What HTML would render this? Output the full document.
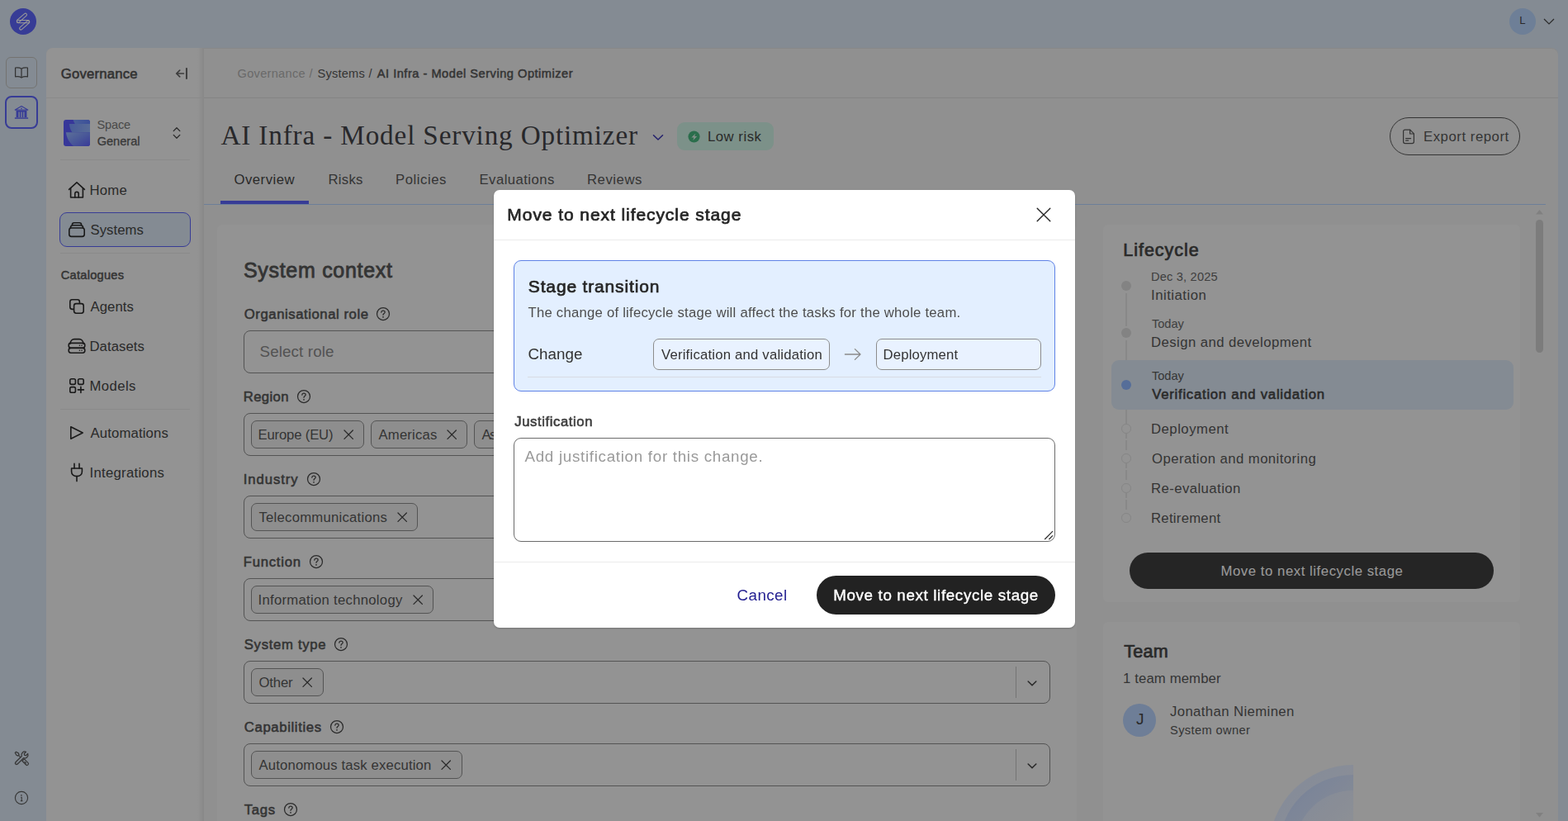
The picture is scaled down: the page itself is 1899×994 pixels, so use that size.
<!DOCTYPE html>
<html lang="en"><head><meta charset="utf-8"><title>AI Infra - Model Serving Optimizer</title>
<style>
html,body{margin:0;padding:0;}
body{width:1899px;height:994px;overflow:hidden;background:#dce8f5;font-family:"Liberation Sans",sans-serif;position:relative;}
#app{position:absolute;left:0;top:0;width:1899px;height:994px;overflow:hidden;}
.t{position:absolute;white-space:nowrap;margin:0;font-weight:400;}
h1,h2,h3{margin:0;}
button.t{background:none;border:0;padding:0;font-family:inherit;text-align:left;cursor:pointer;}
a.t{text-decoration:none;cursor:pointer;}
.overlay{position:absolute;left:0;top:0;width:1899px;height:994px;background:rgba(0,0,0,0.4);}
.modal{position:absolute;background:#fff;border-radius:7px;will-change:transform;box-shadow:0 1px 2px rgba(0,0,0,.22);}
</style></head>
<body>
<div id="app">
<header class="topbar">
<svg style="position:absolute;left:11px;top:9px;" width="34" height="34" viewBox="0 0 34 34" fill="none"><circle cx="17" cy="17" r="16" fill="#5d64fa"/>
<g stroke="#ffffff" stroke-width="1.05" fill="none">
<rect x="-7.5" y="-1.7" width="15" height="3.4" rx="1.7" transform="translate(15.4 12.7) rotate(-41)"/>
<rect x="-7.5" y="-1.7" width="15" height="3.4" rx="1.7" transform="translate(18.7 21.5) rotate(-41)"/>
<rect x="9.4" y="15.4" width="15.2" height="3.4" rx="1.7"/>
</g></svg>
<div style="position:absolute;left:1828px;top:10px;width:32px;height:32px;border-radius:50%;background:#b7d4fc;"></div>
<span class="t" style="left:1840.20px;top:17.47px;font-size:13px;line-height:16px;color:#464646;">L</span>
<svg style="position:absolute;left:1869px;top:22px;" width="14" height="8" viewBox="0 0 14 8" fill="none"><path d="M1 1 L7 7 L13 1" stroke="#464646" stroke-width="1.2"/></svg>
</header>
<nav class="rail">
<div style="position:absolute;left:7px;top:69px;width:38px;height:38px;border:1px solid #c1c0bc;border-radius:6px;box-sizing:border-box;"></div>
<svg style="position:absolute;left:17px;top:80px;" width="18" height="16" viewBox="0 0 18 16" fill="none"><g stroke="#555555" stroke-width="1.25" fill="none" stroke-linejoin="round">
<path d="M9 3.2 C7.2 2 4.2 1.6 1.6 2 V12.8 C4.2 12.4 7.2 12.8 9 14 C10.8 12.8 13.8 12.4 16.4 12.8 V2 C13.8 1.6 10.8 2 9 3.2 Z"/><path d="M9 3.2 V14"/></g></svg>
<div style="position:absolute;left:6px;top:116px;width:40px;height:40px;border:2px solid #5d64fa;border-radius:8px;box-sizing:border-box;"></div>
<svg style="position:absolute;left:17px;top:127px;" width="18" height="18" viewBox="0 0 18 18" fill="none"><path d="M1.3 6.1 L9 1.5 L16.7 6.1 Z" stroke="#5d64fa" stroke-width="1.2" stroke-linejoin="round" fill="none"/><circle cx="9" cy="4.3" r="0.85" fill="#5d64fa"/>
<path d="M2.6 6.9 H15.4 V15 H2.6 Z M5.5 8.4 V15 H6.7 V8.4 Z M8.4 8.4 V15 H9.6 V8.4 Z M11.3 8.4 V15 H12.5 V8.4 Z" fill="#5d64fa" fill-rule="evenodd"/><rect x="0.9" y="15.3" width="16.2" height="1.5" fill="#5d64fa"/></svg>
<svg style="position:absolute;left:16px;top:908px;" width="20" height="20" viewBox="0 0 20 20" fill="none"><g stroke="#5c5c5c" stroke-width="1.25" fill="none" stroke-linecap="round" stroke-linejoin="round">
<path d="M10.3 7.5 A4 4 0 0 1 15.5 2.3 L13.3 4.5 L13.7 6.3 L15.5 6.7 L17.7 4.5 A4 4 0 0 1 12.5 9.7 L5 17.3 A1.65 1.65 0 0 1 2.7 15 Z"/>
<path d="M2.3 3.5 L3.5 2.3 L6.3 3.9 L7.1 5.7 L5.7 7.1 L3.9 6.3 Z"/><path d="M6.4 6.4 L8.6 8.6"/>
<path d="M10.9 13.3 L13.3 10.9 L18 15.6 A1.7 1.7 0 0 1 15.6 18 Z"/><path d="M14 14.4 L15.4 15.8"/></g><circle cx="4" cy="16" r=".6" fill="#5c5c5c"/></svg>
<svg style="position:absolute;left:17px;top:957px;" width="18" height="18" viewBox="0 0 18 18" fill="none"><circle cx="9" cy="9" r="7.6" stroke="#5c5c5c" stroke-width="1.15"/><path d="M8.1 8.3 H9.2 V12.5 M7.9 12.6 H10.4" stroke="#5c5c5c" stroke-width="1.1" fill="none"/><circle cx="8.9" cy="5.8" r="0.85" fill="#5c5c5c"/></svg>
</nav>
<div class="panel" style="position:absolute;left:56px;top:58px;width:1831px;height:936px;background:#f0f0f0;border-radius:8px 8px 0 0;overflow:hidden;box-shadow:inset 0 1px 0 rgba(0,0,0,.05);"></div>
<aside class="sidebar">
<div style="position:absolute;left:56px;top:58px;width:191px;height:936px;background:linear-gradient(to right,rgba(0,0,0,0) 0,rgba(0,0,0,0) 183px,rgba(0,0,0,.025) 186.5px,rgba(0,0,0,.05) 188.5px,rgba(0,0,0,.07) 189.5px,rgba(0,0,0,.07) 191px),#f5f5f5;border-radius:8px 0 0 0;"></div>
<div style="position:absolute;left:56px;top:118px;width:190px;height:1px;background:#e6e6e6;"></div>
<span class="t" style="left:73.78px;top:79.46px;font-size:16.7px;line-height:21px;color:#545454;letter-spacing:0.200px;-webkit-text-stroke:0.57px #545454;">Governance</span>
<svg style="position:absolute;left:212px;top:81px;" width="16" height="16" viewBox="0 0 16 16" fill="none"><g stroke="#666666" fill="none" stroke-linejoin="round"><path d="M10.4 8 H1.8 M5.7 4.2 L1.7 8 L5.7 11.8" stroke-width="1.7" stroke-linecap="round"/><path d="M13.95 1.2 V14.8" stroke-width="2"/></g></svg>
<svg style="position:absolute;left:77px;top:145px" width="32" height="32" viewBox="0 0 32 32">
<defs>
<linearGradient id="sg1" x1="0" y1="0" x2="1" y2="0"><stop offset="0" stop-color="#7ba2ff"/><stop offset="1" stop-color="#6484ff"/></linearGradient>
<linearGradient id="sg2" x1="0" y1="0" x2="1" y2="0"><stop offset="0" stop-color="#7899fd"/><stop offset="1" stop-color="#93b4fc"/></linearGradient>
<linearGradient id="sg3" x1="0" y1="0" x2="1" y2="1"><stop offset="0" stop-color="#9bbcfd"/><stop offset="0.5" stop-color="#7b93fd"/><stop offset="1" stop-color="#5f61fd"/></linearGradient>
<clipPath id="sc"><rect width="32" height="32" rx="3"/></clipPath></defs>
<g clip-path="url(#sc)"><rect width="32" height="32" fill="#5d5cff"/>
<path d="M11.6 0 H32 V5 H13.8 C12.8 3.4 12 1.8 11.6 0 Z" fill="url(#sg1)"/>
<path d="M6.8 5 H32 V15.2 H10.4 C8.4 12.4 7.2 8.8 6.8 5 Z" fill="url(#sg2)"/>
<path d="M2.9 15.2 H32 V32 H12.3 C7.2 28 3.6 22 2.9 15.2 Z" fill="url(#sg3)"/></g></svg>
<span class="t" style="left:117.50px;top:142.16px;font-size:14.6px;line-height:18px;color:#7a7a7a;letter-spacing:-0.191px;">Space</span>
<span class="t" style="left:117.64px;top:161.96px;font-size:14.6px;line-height:18px;color:#5e5e5e;letter-spacing:0.007px;-webkit-text-stroke:0.28px #5e5e5e;">General</span>
<svg style="position:absolute;left:209px;top:153px;" width="10" height="16" viewBox="0 0 10 16" fill="none"><g stroke="#464646" stroke-width="1.3" fill="none" stroke-linecap="round" stroke-linejoin="round"><path d="M1.2 5.6 L5 1.8 L8.8 5.6"/><path d="M1.2 10.4 L5 14.2 L8.8 10.4"/></g></svg>
<div style="position:absolute;left:73px;top:193px;width:157px;height:1px;background:#e6e6e6;"></div>
<svg style="position:absolute;left:82px;top:219px;" width="22" height="22" viewBox="0 0 22 22" fill="none"><g stroke="#2b2b2b" stroke-width="1.6" fill="none" stroke-linecap="round" stroke-linejoin="round"><path d="M1.6 10.4 L11 1.8 L20.4 10.4"/><path d="M3.6 9 V20 H18.4 V9"/><path d="M8.8 20 V15.6 a2.2 2.2 0 0 1 4.4 0 V20"/></g></svg>
<a class="t" style="left:108.50px;top:220.46px;font-size:16.7px;line-height:21px;color:#464646;letter-spacing:0.256px;">Home</a>
<div style="position:absolute;left:72px;top:257px;width:159px;height:42px;background:#dce8f5;border:1px solid #5d64fa;border-radius:9px;box-sizing:border-box;"></div>
<svg style="position:absolute;left:82px;top:268px;" width="22" height="20" viewBox="0 0 22 20" fill="none"><g stroke="#2b2b2b" stroke-width="1.6" fill="none" stroke-linecap="round" stroke-linejoin="round"><path d="M5.4 4.2 C5.4 2.6 6.4 1.8 7.8 1.8 H14.2 C15.6 1.8 16.6 2.6 16.6 4.2"/><path d="M3.4 8 C3.4 6 4.6 4.8 6.4 4.8 H15.6 C17.4 4.8 18.6 6 18.6 8"/><rect x="1.8" y="8" width="18.4" height="10.4" rx="2.6"/></g></svg>
<a class="t" style="left:109.50px;top:268.46px;font-size:16.7px;line-height:21px;color:#464646;letter-spacing:0.061px;">Systems</a>
<div style="position:absolute;left:73px;top:306px;width:157px;height:1px;background:#e6e6e6;"></div>
<span class="t" style="left:73.75px;top:324.16px;font-size:14.6px;line-height:18px;color:#585858;letter-spacing:0.274px;-webkit-text-stroke:0.5px #585858;">Catalogues</span>
<svg style="position:absolute;left:83px;top:361px;" width="20" height="20" viewBox="0 0 20 20" fill="none"><g stroke="#2b2b2b" stroke-width="1.6" fill="none" stroke-linecap="round" stroke-linejoin="round"><rect x="1.8" y="1.8" width="11.6" height="11.6" rx="2.6"/><rect x="6.6" y="6.6" width="11.6" height="11.6" rx="2.6" fill="#f5f5f5"/></g></svg>
<a class="t" style="left:109.50px;top:361.46px;font-size:16.7px;line-height:21px;color:#464646;letter-spacing:0.078px;">Agents</a>
<svg style="position:absolute;left:82px;top:409px;" width="22" height="20" viewBox="0 0 22 20" fill="none"><g stroke="#2b2b2b" stroke-width="1.6" fill="none" stroke-linecap="round" stroke-linejoin="round"><path d="M3.2 7 C3.2 3.6 5.6 1.6 8 1.6 H14 C16.4 1.6 18.8 3.6 18.8 7"/><rect x="1.2" y="6.4" width="19.6" height="5.8" rx="2.6"/><rect x="1.2" y="12.4" width="19.6" height="5.8" rx="2.6"/></g><g fill="#2b2b2b"><circle cx="14.4" cy="9.3" r=".8"/><circle cx="17" cy="9.3" r=".8"/><circle cx="14.4" cy="15.3" r=".8"/><circle cx="17" cy="15.3" r=".8"/></g></svg>
<a class="t" style="left:108.50px;top:409.46px;font-size:16.7px;line-height:21px;color:#464646;letter-spacing:0.070px;">Datasets</a>
<svg style="position:absolute;left:83px;top:457px;" width="20" height="20" viewBox="0 0 20 20" fill="none"><g stroke="#2b2b2b" stroke-width="1.6" fill="none" stroke-linecap="round" stroke-linejoin="round"><rect x="1.8" y="1.8" width="6.6" height="6.6" rx="1.8"/><rect x="11.6" y="1.8" width="6.6" height="6.6" rx="1.8"/><rect x="1.8" y="11.6" width="6.6" height="6.6" rx="1.8"/><path d="M14.9 11.4 V18.4 M11.4 14.9 H18.4"/></g></svg>
<a class="t" style="left:108.50px;top:457.46px;font-size:16.7px;line-height:21px;color:#464646;letter-spacing:0.410px;">Models</a>
<div style="position:absolute;left:73px;top:495px;width:157px;height:1px;background:#e6e6e6;"></div>
<svg style="position:absolute;left:84px;top:515px;" width="18" height="18" viewBox="0 0 18 18" fill="none"><g stroke="#2b2b2b" stroke-width="1.6" fill="none" stroke-linecap="round" stroke-linejoin="round"><path d="M1.8 1.8 L16.2 9 L1.8 16.2 Z"/></g></svg>
<a class="t" style="left:109.50px;top:514.46px;font-size:16.7px;line-height:21px;color:#464646;letter-spacing:0.158px;">Automations</a>
<svg style="position:absolute;left:85px;top:560px;" width="16" height="24" viewBox="0 0 16 24" fill="none"><g stroke="#2b2b2b" stroke-width="1.6" fill="none" stroke-linecap="round" stroke-linejoin="round"><path d="M5 1.4 V7 M11 1.4 V7"/><path d="M1.6 7 H14.4 V11 C14.4 14.6 11.6 16.6 8 16.6 C4.4 16.6 1.6 14.6 1.6 11 Z"/><path d="M8 16.6 V22.6"/></g></svg>
<a class="t" style="left:108.50px;top:562.46px;font-size:16.7px;line-height:21px;color:#464646;letter-spacing:0.286px;">Integrations</a>
</aside>
<main class="main">
<div style="position:absolute;left:247px;top:118px;width:1640px;height:1px;background:#dcdcdc;"></div>
<a class="t" style="left:287.50px;top:79.96px;font-size:14.6px;line-height:18px;color:#b0b0b0;letter-spacing:0.290px;">Governance</a>
<span class="t" style="left:374.50px;top:79.96px;font-size:14.6px;line-height:18px;color:#b0b0b0;">/</span>
<a class="t" style="left:384.50px;top:79.96px;font-size:14.6px;line-height:18px;color:#585858;letter-spacing:0.224px;">Systems</a>
<span class="t" style="left:446.50px;top:79.96px;font-size:14.6px;line-height:18px;color:#585858;">/</span>
<span class="t" style="left:456.75px;top:79.96px;font-size:14.6px;line-height:18px;color:#585858;letter-spacing:0.517px;-webkit-text-stroke:0.5px #585858;">AI Infra - Model Serving Optimizer</span>
<h1 class="t" style="left:267.50px;top:142.99px;font-size:33.2px;line-height:42px;color:#444448;font-family:'Liberation Serif',serif;letter-spacing:0.851px;">AI Infra - Model Serving Optimizer</h1>
<svg style="position:absolute;left:789.5px;top:161.6px;" width="14" height="9" viewBox="0 0 14 9" fill="none"><path d="M1.5 1.7 L7 7 L12.5 1.7" stroke="#3a34b4" stroke-width="1.5" stroke-linecap="round" stroke-linejoin="round"/></svg>
<div style="position:absolute;left:820px;top:148px;width:117px;height:34px;background:#cff2e4;border-radius:9px;"></div>
<svg style="position:absolute;left:833.3px;top:157.5px;" width="15" height="15" viewBox="0 0 15 15" fill="none"><circle cx="7.5" cy="7.5" r="7.05" fill="#48b77f"/><path d="M9.3 3.7 L4.3 8.5 H7.3 L6.3 11.9 L11.2 7 H8.2 Z" fill="#ffffff" fill-opacity=".8"/></svg>
<span class="t" style="left:857.00px;top:155.26px;font-size:16.7px;line-height:21px;color:#464646;letter-spacing:0.520px;">Low risk</span>
<div style="position:absolute;left:1683px;top:142px;width:158px;height:46px;border:1px solid #585858;border-radius:23px;box-sizing:border-box;"></div>
<svg style="position:absolute;left:1698px;top:155.7px;" width="16" height="19" viewBox="0 0 16 19" fill="none"><g stroke="#585858" stroke-width="1.2" fill="none" stroke-linejoin="round" stroke-linecap="round"><path d="M3.6 1.2 H9.8 L14.4 5.8 V15.6 C14.4 16.8 13.6 17.6 12.4 17.6 H3.6 C2.4 17.6 1.6 16.8 1.6 15.6 V3.2 C1.6 2 2.4 1.2 3.6 1.2 Z"/><path d="M9.6 1.4 V6 H14.2"/><path d="M4.6 11.6 H10.6 M4.6 14.2 H7.6"/></g></svg>
<button class="t" style="left:1724.00px;top:154.66px;font-size:16.7px;line-height:21px;color:#585858;letter-spacing:0.557px;">Export report</button>
<a class="t" style="left:283.50px;top:207.46px;font-size:16.7px;line-height:21px;color:#464646;letter-spacing:0.501px;">Overview</a>
<a class="t" style="left:397.50px;top:207.46px;font-size:16.7px;line-height:21px;color:#585858;letter-spacing:0.263px;">Risks</a>
<a class="t" style="left:479.00px;top:207.46px;font-size:16.7px;line-height:21px;color:#585858;letter-spacing:0.549px;">Policies</a>
<a class="t" style="left:580.50px;top:207.46px;font-size:16.7px;line-height:21px;color:#585858;letter-spacing:0.457px;">Evaluations</a>
<a class="t" style="left:711.00px;top:207.46px;font-size:16.7px;line-height:21px;color:#585858;letter-spacing:0.547px;">Reviews</a>
<div style="position:absolute;left:247px;top:247px;width:1625px;height:1px;background:#b4d4ff;"></div>
<div style="position:absolute;left:267px;top:243px;width:107px;height:4px;background:#5d64fa;"></div>
<div style="position:absolute;left:263px;top:272px;width:1041px;height:828px;background:#f5f5f5;border-radius:6px;"></div>
<h2 class="t" style="left:294.93px;top:312.44px;font-size:25px;line-height:31px;color:#585858;letter-spacing:0.707px;-webkit-text-stroke:0.85px #585858;">System context</h2>
<label class="t" style="left:295.79px;top:370.46px;font-size:16.7px;line-height:21px;color:#585858;letter-spacing:0.564px;-webkit-text-stroke:0.57px #585858;">Organisational role</label><svg style="position:absolute;left:455px;top:371px;" width="18" height="18" viewBox="0 0 18 18" fill="none"><circle cx="9" cy="9" r="7.5" stroke="#474747" stroke-width="1.25"/><path d="M6.8 7.2 C6.8 5.9 7.7 5.1 9 5.1 C10.3 5.1 11.2 5.9 11.2 7 C11.2 8.5 9 8.6 9 10.3" stroke="#474747" stroke-width="1.25" fill="none" stroke-linecap="round"/><circle cx="9" cy="12.8" r=".9" fill="#474747"/></svg><div style="position:absolute;left:295px;top:400px;width:977px;height:52px;border:1px solid #8c8c8c;border-radius:8px;box-sizing:border-box;"></div><div style="position:absolute;left:1230px;top:407px;width:1px;height:38px;background:#c2c2c2;"></div><svg style="position:absolute;left:1243px;top:422.8px;" width="14" height="9" viewBox="0 0 14 9" fill="none"><path d="M2.2 2 L7 6.8 L11.8 2" stroke="#464646" stroke-width="1.6" stroke-linecap="round" stroke-linejoin="round"/></svg>
<span class="t" style="left:314.50px;top:414.45px;font-size:18.8px;line-height:24px;color:#8a8a8a;letter-spacing:0.121px;">Select role</span>
<label class="t" style="left:294.79px;top:470.46px;font-size:16.7px;line-height:21px;color:#585858;letter-spacing:0.366px;-webkit-text-stroke:0.57px #585858;">Region</label><svg style="position:absolute;left:359px;top:471px;" width="18" height="18" viewBox="0 0 18 18" fill="none"><circle cx="9" cy="9" r="7.5" stroke="#474747" stroke-width="1.25"/><path d="M6.8 7.2 C6.8 5.9 7.7 5.1 9 5.1 C10.3 5.1 11.2 5.9 11.2 7 C11.2 8.5 9 8.6 9 10.3" stroke="#474747" stroke-width="1.25" fill="none" stroke-linecap="round"/><circle cx="9" cy="12.8" r=".9" fill="#474747"/></svg><div style="position:absolute;left:295px;top:500px;width:977px;height:52px;border:1px solid #8c8c8c;border-radius:8px;box-sizing:border-box;"></div><div style="position:absolute;left:304px;top:509px;width:137px;height:34px;border:1px solid #8c8c8c;border-radius:7px;box-sizing:border-box;background:#ededed;"></div><span class="t" style="left:312.50px;top:516.46px;font-size:16.7px;line-height:21px;color:#585858;letter-spacing:-0.169px;">Europe (EU)</span><svg style="position:absolute;left:415.8px;top:519.8px;" width="12.4" height="12.4" viewBox="0 0 12.4 12.4" fill="none"><path d="M1 1 L11.4 11.4 M11.4 1 L1 11.4" stroke="#474747" stroke-width="1.3" stroke-linecap="round"/></svg><div style="position:absolute;left:449px;top:509px;width:117px;height:34px;border:1px solid #8c8c8c;border-radius:7px;box-sizing:border-box;background:#ededed;"></div><span class="t" style="left:458.50px;top:516.46px;font-size:16.7px;line-height:21px;color:#585858;letter-spacing:0.186px;">Americas</span><svg style="position:absolute;left:540.8px;top:519.8px;" width="12.4" height="12.4" viewBox="0 0 12.4 12.4" fill="none"><path d="M1 1 L11.4 11.4 M11.4 1 L1 11.4" stroke="#474747" stroke-width="1.3" stroke-linecap="round"/></svg><div style="position:absolute;left:574px;top:509px;width:66px;height:34px;border:1px solid #8c8c8c;border-radius:7px;box-sizing:border-box;background:#ededed;"></div><span class="t" style="left:583.50px;top:516.46px;font-size:16.7px;line-height:21px;color:#585858;letter-spacing:-1.561px;">Asia</span><svg style="position:absolute;left:618.8px;top:519.8px;" width="12.4" height="12.4" viewBox="0 0 12.4 12.4" fill="none"><path d="M1 1 L11.4 11.4 M11.4 1 L1 11.4" stroke="#474747" stroke-width="1.3" stroke-linecap="round"/></svg><div style="position:absolute;left:1230px;top:507px;width:1px;height:38px;background:#c2c2c2;"></div><svg style="position:absolute;left:1243px;top:522.8px;" width="14" height="9" viewBox="0 0 14 9" fill="none"><path d="M2.2 2 L7 6.8 L11.8 2" stroke="#464646" stroke-width="1.6" stroke-linecap="round" stroke-linejoin="round"/></svg>
<label class="t" style="left:294.79px;top:570.46px;font-size:16.7px;line-height:21px;color:#585858;letter-spacing:0.916px;-webkit-text-stroke:0.57px #585858;">Industry</label><svg style="position:absolute;left:371px;top:571px;" width="18" height="18" viewBox="0 0 18 18" fill="none"><circle cx="9" cy="9" r="7.5" stroke="#474747" stroke-width="1.25"/><path d="M6.8 7.2 C6.8 5.9 7.7 5.1 9 5.1 C10.3 5.1 11.2 5.9 11.2 7 C11.2 8.5 9 8.6 9 10.3" stroke="#474747" stroke-width="1.25" fill="none" stroke-linecap="round"/><circle cx="9" cy="12.8" r=".9" fill="#474747"/></svg><div style="position:absolute;left:295px;top:600px;width:977px;height:52px;border:1px solid #8c8c8c;border-radius:8px;box-sizing:border-box;"></div><div style="position:absolute;left:304px;top:609px;width:202px;height:34px;border:1px solid #8c8c8c;border-radius:7px;box-sizing:border-box;background:#ededed;"></div><span class="t" style="left:313.50px;top:616.46px;font-size:16.7px;line-height:21px;color:#585858;letter-spacing:0.245px;">Telecommunications</span><svg style="position:absolute;left:480.8px;top:619.8px;" width="12.4" height="12.4" viewBox="0 0 12.4 12.4" fill="none"><path d="M1 1 L11.4 11.4 M11.4 1 L1 11.4" stroke="#474747" stroke-width="1.3" stroke-linecap="round"/></svg><div style="position:absolute;left:1230px;top:607px;width:1px;height:38px;background:#c2c2c2;"></div><svg style="position:absolute;left:1243px;top:622.8px;" width="14" height="9" viewBox="0 0 14 9" fill="none"><path d="M2.2 2 L7 6.8 L11.8 2" stroke="#464646" stroke-width="1.6" stroke-linecap="round" stroke-linejoin="round"/></svg>
<label class="t" style="left:294.79px;top:670.46px;font-size:16.7px;line-height:21px;color:#585858;letter-spacing:0.744px;-webkit-text-stroke:0.57px #585858;">Function</label><svg style="position:absolute;left:374px;top:671px;" width="18" height="18" viewBox="0 0 18 18" fill="none"><circle cx="9" cy="9" r="7.5" stroke="#474747" stroke-width="1.25"/><path d="M6.8 7.2 C6.8 5.9 7.7 5.1 9 5.1 C10.3 5.1 11.2 5.9 11.2 7 C11.2 8.5 9 8.6 9 10.3" stroke="#474747" stroke-width="1.25" fill="none" stroke-linecap="round"/><circle cx="9" cy="12.8" r=".9" fill="#474747"/></svg><div style="position:absolute;left:295px;top:700px;width:977px;height:52px;border:1px solid #8c8c8c;border-radius:8px;box-sizing:border-box;"></div><div style="position:absolute;left:304px;top:709px;width:221px;height:34px;border:1px solid #8c8c8c;border-radius:7px;box-sizing:border-box;background:#ededed;"></div><span class="t" style="left:312.50px;top:716.46px;font-size:16.7px;line-height:21px;color:#585858;letter-spacing:0.286px;">Information technology</span><svg style="position:absolute;left:499.8px;top:719.8px;" width="12.4" height="12.4" viewBox="0 0 12.4 12.4" fill="none"><path d="M1 1 L11.4 11.4 M11.4 1 L1 11.4" stroke="#474747" stroke-width="1.3" stroke-linecap="round"/></svg><div style="position:absolute;left:1230px;top:707px;width:1px;height:38px;background:#c2c2c2;"></div><svg style="position:absolute;left:1243px;top:722.8px;" width="14" height="9" viewBox="0 0 14 9" fill="none"><path d="M2.2 2 L7 6.8 L11.8 2" stroke="#464646" stroke-width="1.6" stroke-linecap="round" stroke-linejoin="round"/></svg>
<label class="t" style="left:295.79px;top:770.46px;font-size:16.7px;line-height:21px;color:#585858;letter-spacing:0.690px;-webkit-text-stroke:0.57px #585858;">System type</label><svg style="position:absolute;left:403.5px;top:771px;" width="18" height="18" viewBox="0 0 18 18" fill="none"><circle cx="9" cy="9" r="7.5" stroke="#474747" stroke-width="1.25"/><path d="M6.8 7.2 C6.8 5.9 7.7 5.1 9 5.1 C10.3 5.1 11.2 5.9 11.2 7 C11.2 8.5 9 8.6 9 10.3" stroke="#474747" stroke-width="1.25" fill="none" stroke-linecap="round"/><circle cx="9" cy="12.8" r=".9" fill="#474747"/></svg><div style="position:absolute;left:295px;top:800px;width:977px;height:52px;border:1px solid #8c8c8c;border-radius:8px;box-sizing:border-box;"></div><div style="position:absolute;left:304px;top:809px;width:88px;height:34px;border:1px solid #8c8c8c;border-radius:7px;box-sizing:border-box;background:#ededed;"></div><span class="t" style="left:313.50px;top:816.46px;font-size:16.7px;line-height:21px;color:#585858;letter-spacing:-0.169px;">Other</span><svg style="position:absolute;left:366.3px;top:819.8px;" width="12.4" height="12.4" viewBox="0 0 12.4 12.4" fill="none"><path d="M1 1 L11.4 11.4 M11.4 1 L1 11.4" stroke="#474747" stroke-width="1.3" stroke-linecap="round"/></svg><div style="position:absolute;left:1230px;top:807px;width:1px;height:38px;background:#c2c2c2;"></div><svg style="position:absolute;left:1243px;top:822.8px;" width="14" height="9" viewBox="0 0 14 9" fill="none"><path d="M2.2 2 L7 6.8 L11.8 2" stroke="#464646" stroke-width="1.6" stroke-linecap="round" stroke-linejoin="round"/></svg>
<label class="t" style="left:295.79px;top:870.46px;font-size:16.7px;line-height:21px;color:#585858;letter-spacing:0.637px;-webkit-text-stroke:0.57px #585858;">Capabilities</label><svg style="position:absolute;left:399px;top:871px;" width="18" height="18" viewBox="0 0 18 18" fill="none"><circle cx="9" cy="9" r="7.5" stroke="#474747" stroke-width="1.25"/><path d="M6.8 7.2 C6.8 5.9 7.7 5.1 9 5.1 C10.3 5.1 11.2 5.9 11.2 7 C11.2 8.5 9 8.6 9 10.3" stroke="#474747" stroke-width="1.25" fill="none" stroke-linecap="round"/><circle cx="9" cy="12.8" r=".9" fill="#474747"/></svg><div style="position:absolute;left:295px;top:900px;width:977px;height:52px;border:1px solid #8c8c8c;border-radius:8px;box-sizing:border-box;"></div><div style="position:absolute;left:304px;top:909px;width:256px;height:34px;border:1px solid #8c8c8c;border-radius:7px;box-sizing:border-box;background:#ededed;"></div><span class="t" style="left:313.50px;top:916.46px;font-size:16.7px;line-height:21px;color:#585858;letter-spacing:0.157px;">Autonomous task execution</span><svg style="position:absolute;left:534.3px;top:919.8px;" width="12.4" height="12.4" viewBox="0 0 12.4 12.4" fill="none"><path d="M1 1 L11.4 11.4 M11.4 1 L1 11.4" stroke="#474747" stroke-width="1.3" stroke-linecap="round"/></svg><div style="position:absolute;left:1230px;top:907px;width:1px;height:38px;background:#c2c2c2;"></div><svg style="position:absolute;left:1243px;top:922.8px;" width="14" height="9" viewBox="0 0 14 9" fill="none"><path d="M2.2 2 L7 6.8 L11.8 2" stroke="#464646" stroke-width="1.6" stroke-linecap="round" stroke-linejoin="round"/></svg>
<label class="t" style="left:295.79px;top:970.06px;font-size:16.7px;line-height:21px;color:#585858;letter-spacing:0.675px;-webkit-text-stroke:0.57px #585858;">Tags</label>
<svg style="position:absolute;left:342.6px;top:971.3px;" width="18" height="18" viewBox="0 0 18 18" fill="none"><circle cx="9" cy="9" r="7.5" stroke="#474747" stroke-width="1.25"/><path d="M6.8 7.2 C6.8 5.9 7.7 5.1 9 5.1 C10.3 5.1 11.2 5.9 11.2 7 C11.2 8.5 9 8.6 9 10.3" stroke="#474747" stroke-width="1.25" fill="none" stroke-linecap="round"/><circle cx="9" cy="12.8" r=".9" fill="#474747"/></svg>
<div style="position:absolute;left:1336px;top:272px;width:505px;height:456.5px;background:#f5f5f5;border-radius:6px;"></div>
<h2 class="t" style="left:1360.37px;top:290.05px;font-size:21.5px;line-height:27px;color:#464646;letter-spacing:0.947px;-webkit-text-stroke:0.73px #464646;">Lifecycle</h2>
<div style="position:absolute;left:1363.3px;top:354.5px;width:1.4px;height:40px;background:#e3e3e3;"></div>
<div style="position:absolute;left:1363.3px;top:411.5px;width:1.4px;height:24.5px;background:#e3e3e3;"></div>
<div style="position:absolute;left:1346px;top:436px;width:487px;height:60px;background:#dce8f5;border-radius:9px;"></div>
<div style="position:absolute;left:1363px;top:496px;width:2px;height:17.5px;background:#e3e3e3;"></div>
<div style="position:absolute;left:1363px;top:524.5px;width:2px;height:6px;background:#e3e3e3;"></div>
<div style="position:absolute;left:1363px;top:533px;width:2px;height:12px;background:#e3e3e3;"></div>
<div style="position:absolute;left:1363px;top:560.5px;width:2px;height:6px;background:#e3e3e3;"></div>
<div style="position:absolute;left:1363px;top:569px;width:2px;height:12px;background:#e3e3e3;"></div>
<div style="position:absolute;left:1363px;top:596.5px;width:2px;height:6px;background:#e3e3e3;"></div>
<div style="position:absolute;left:1363px;top:605px;width:2px;height:12px;background:#e3e3e3;"></div>
<div style="position:absolute;left:1358px;top:340px;width:12px;height:12px;border-radius:50%;background:#dadada;"></div>
<div style="position:absolute;left:1358px;top:397px;width:12px;height:12px;border-radius:50%;background:#dadada;"></div>
<div style="position:absolute;left:1358px;top:460px;width:12px;height:12px;border-radius:50%;background:#8fb7ff;"></div>
<div style="position:absolute;left:1358.2px;top:513.2px;width:11.6px;height:11.6px;border-radius:50%;border:1.8px solid #dedede;box-sizing:border-box;background:#f5f5f5;"></div>
<div style="position:absolute;left:1358.2px;top:549.2px;width:11.6px;height:11.6px;border-radius:50%;border:1.8px solid #dedede;box-sizing:border-box;background:#f5f5f5;"></div>
<div style="position:absolute;left:1358.2px;top:585.2px;width:11.6px;height:11.6px;border-radius:50%;border:1.8px solid #dedede;box-sizing:border-box;background:#f5f5f5;"></div>
<div style="position:absolute;left:1358.2px;top:621.2px;width:11.6px;height:11.6px;border-radius:50%;border:1.8px solid #dedede;box-sizing:border-box;background:#f5f5f5;"></div>
<span class="t" style="left:1394.00px;top:326.26px;font-size:14.6px;line-height:18px;color:#6a6a6a;letter-spacing:0.192px;">Dec 3, 2025</span>
<span class="t" style="left:1394.00px;top:346.76px;font-size:16.7px;line-height:21px;color:#585858;letter-spacing:0.514px;">Initiation</span>
<span class="t" style="left:1395.00px;top:382.96px;font-size:14.6px;line-height:18px;color:#6a6a6a;letter-spacing:-0.036px;">Today</span>
<span class="t" style="left:1394.00px;top:403.76px;font-size:16.7px;line-height:21px;color:#585858;letter-spacing:0.453px;">Design and development</span>
<span class="t" style="left:1395.00px;top:445.96px;font-size:14.6px;line-height:18px;color:#5a5a5a;letter-spacing:-0.036px;">Today</span>
<span class="t" style="left:1395.29px;top:466.66px;font-size:16.7px;line-height:21px;color:#464646;letter-spacing:0.749px;-webkit-text-stroke:0.57px #464646;">Verification and validation</span>
<span class="t" style="left:1394.00px;top:508.76px;font-size:16.7px;line-height:21px;color:#585858;letter-spacing:0.510px;">Deployment</span>
<span class="t" style="left:1395.00px;top:544.76px;font-size:16.7px;line-height:21px;color:#585858;letter-spacing:0.455px;">Operation and monitoring</span>
<span class="t" style="left:1394.00px;top:580.76px;font-size:16.7px;line-height:21px;color:#585858;letter-spacing:0.443px;">Re-evaluation</span>
<span class="t" style="left:1394.00px;top:616.66px;font-size:16.7px;line-height:21px;color:#585858;letter-spacing:0.280px;">Retirement</span>
<div style="position:absolute;left:1368px;top:669px;width:441px;height:44px;background:#3f3f3f;border-radius:22px;"></div>
<button class="t" style="left:1478.50px;top:680.66px;font-size:16.7px;line-height:21px;color:#ffffff;letter-spacing:0.567px;">Move to next lifecycle stage</button>
<div style="position:absolute;left:1336px;top:753px;width:505px;height:347px;background:#f5f5f5;border-radius:6px;overflow:hidden;"><svg style="position:absolute;left:180px;top:161px" width="140" height="120" viewBox="180 160 140 120">
<defs><linearGradient id="ag" x1="0" y1="0" x2="1" y2="1"><stop offset="0" stop-color="#fff" stop-opacity="0"/><stop offset="0.35" stop-color="#f5f5f5" stop-opacity="0"/><stop offset="1" stop-color="#f5f5f5" stop-opacity=".8"/></linearGradient>
<clipPath id="ac"><rect x="180" y="160" width="123" height="120"/></clipPath></defs>
<g clip-path="url(#ac)"><circle cx="303" cy="273.8" r="101.8" fill="#dee9ff"/><circle cx="303" cy="273.8" r="89.9" fill="#c8daff"/><circle cx="303" cy="273.8" r="70.9" fill="#dae6ff"/><rect x="180" y="160" width="123" height="120" fill="url(#ag)"/></g></svg></div>
<h2 class="t" style="left:1361.37px;top:775.85px;font-size:21.5px;line-height:27px;color:#464646;letter-spacing:0.202px;-webkit-text-stroke:0.73px #464646;">Team</h2>
<span class="t" style="left:1360.00px;top:810.76px;font-size:16.7px;line-height:21px;color:#585858;letter-spacing:0.142px;">1 team member</span>
<div style="position:absolute;left:1360px;top:852px;width:40px;height:40px;border-radius:50%;background:#b7d2fc;"></div>
<span class="t" style="left:1376.00px;top:859.45px;font-size:19px;line-height:24px;color:#464646;">J</span>
<span class="t" style="left:1417.00px;top:850.96px;font-size:16.7px;line-height:21px;color:#585858;letter-spacing:0.406px;">Jonathan Nieminen</span>
<span class="t" style="left:1417.00px;top:875.16px;font-size:14.6px;line-height:18px;color:#585858;letter-spacing:0.400px;">System owner</span>
<div style="position:absolute;left:1860px;top:266px;width:9px;height:161px;background:#cfcfcf;border-radius:5px;"></div>
<svg style="position:absolute;left:1860px;top:254.05px;" width="9" height="5.5" viewBox="0 0 9 5.5" fill="none"><path d="M0 5.5 L4.5 0 L9 5.5 Z" fill="#d5d5d5"/></svg>
<svg style="position:absolute;left:1860px;top:984.25px;" width="9" height="5.5" viewBox="0 0 9 5.5" fill="none"><path d="M0 0 L4.5 5.5 L9 0 Z" fill="#d5d5d5"/></svg>
</main>
</div>
<div class="overlay"></div>
<div class="modal" role="dialog" style="left:598px;top:230px;width:704px;height:530px;"><h2 class="t" style="left:16.36px;top:16.75px;font-size:21px;line-height:26px;color:#262626;letter-spacing:0.926px;-webkit-text-stroke:0.71px #262626;">Move to next lifecycle stage</h2><svg style="position:absolute;left:656px;top:20.3px;" width="20" height="20" viewBox="0 0 20 20" fill="none"><path d="M2.2 2.2 L17.8 17.8 M17.8 2.2 L2.2 17.8" stroke="#262626" stroke-width="1.4" stroke-linecap="round"/></svg><div style="position:absolute;left:0px;top:60px;width:704px;height:1px;background:#ebebeb;"></div><div style="position:absolute;left:24px;top:85px;width:656px;height:159px;background:#e3efff;border:1px solid #5f82e6;border-radius:9px;box-sizing:border-box;"></div><h3 class="t" style="left:41.86px;top:103.95px;font-size:21px;line-height:26px;color:#262626;letter-spacing:0.836px;-webkit-text-stroke:0.71px #262626;">Stage transition</h3><span class="t" style="left:41.50px;top:137.76px;font-size:16.7px;line-height:21px;color:#4d4d4d;letter-spacing:0.237px;">The change of lifecycle stage will affect the tasks for the whole team.</span><span class="t" style="left:41.50px;top:186.65px;font-size:18.8px;line-height:24px;color:#333333;letter-spacing:0.031px;">Change</span><div style="position:absolute;left:193px;top:180px;width:214px;height:38px;background:#e9f2ff;border:1px solid #8c8c8c;border-radius:7px;box-sizing:border-box;"></div><span class="t" style="left:203.00px;top:188.76px;font-size:16.7px;line-height:21px;color:#333333;letter-spacing:0.213px;">Verification and validation</span><svg style="position:absolute;left:424px;top:191px;" width="22" height="16" viewBox="0 0 22 16" fill="none"><path d="M1.4 8 H20 M13.4 1.6 L20 8 L13.4 14.4" stroke="#8a8a8a" stroke-width="1.3" stroke-linecap="round" stroke-linejoin="round"/></svg><div style="position:absolute;left:463px;top:180px;width:200px;height:38px;background:#e9f2ff;border:1px solid #8c8c8c;border-radius:7px;box-sizing:border-box;"></div><span class="t" style="left:471.50px;top:188.76px;font-size:16.7px;line-height:21px;color:#333333;letter-spacing:0.177px;">Deployment</span><div style="position:absolute;left:41px;top:226px;width:622px;height:1px;background:#d8dce2;"></div><label class="t" style="left:25.28px;top:269.76px;font-size:16.7px;line-height:21px;color:#3d3d3d;letter-spacing:0.585px;-webkit-text-stroke:0.57px #3d3d3d;">Justification</label><div style="position:absolute;left:24px;top:300px;width:656px;height:126px;background:#fff;border:1px solid #6b6b6b;border-radius:9px;box-sizing:border-box;"></div><span class="t" style="left:37.50px;top:310.55px;font-size:18.8px;line-height:24px;color:#9a9a9a;letter-spacing:0.698px;">Add justification for this change.</span><svg style="position:absolute;left:665.5px;top:411.5px;" width="12" height="12" viewBox="0 0 12 12" fill="none"><path d="M11 1.2 L1.2 11 M11 6.4 L6.4 11" stroke="#2a2a2a" stroke-width="1.2"/></svg><div style="position:absolute;left:0px;top:450px;width:704px;height:1px;background:#ebebeb;"></div><button class="t" style="left:294.50px;top:478.75px;font-size:18.8px;line-height:24px;color:#211d90;letter-spacing:0.442px;">Cancel</button><div style="position:absolute;left:391px;top:467px;width:289px;height:47px;background:#222;border-radius:24px;"></div><button class="t" style="left:411.18px;top:478.75px;font-size:18.8px;line-height:24px;color:#ffffff;letter-spacing:0.644px;-webkit-text-stroke:0.36px #ffffff;">Move to next lifecycle stage</button></div>
</body></html>
